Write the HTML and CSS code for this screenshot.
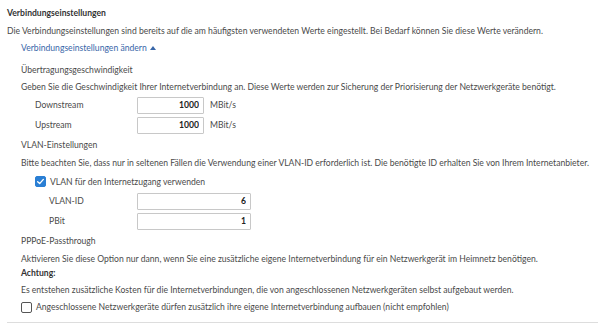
FILE: index.html
```html
<!doctype html>
<html lang="de">
  <head>
    <meta charset="UTF-8" />
    <meta name="viewport" content="width=device-width, initial-scale=1.0" />
    <title>Verbindungseinstellungen</title>
    <link rel="stylesheet" href="styles.css">
  </head>
  <body>
    <div class="page">
      <h2 class="title">Verbindungseinstellungen</h2>
      <p class="line">Die Verbindungseinstellungen sind bereits auf die am häufigsten verwendeten Werte eingestellt. Bei Bedarf können Sie diese Werte verändern.</p>

      <div class="details">
        <a class="toggle" href="#">Verbindungseinstellungen ändern <span class="arrow"></span></a>

        <h3 class="subtitle first">Übertragungsgeschwindigkeit</h3>
        <p class="line tight">Geben Sie die Geschwindigkeit Ihrer Internetverbindung an. Diese Werte werden zur Sicherung der Priorisierung der Netzwerkgeräte benötigt.</p>
        <div class="fields">
          <div class="row">
            <label class="label">Downstream</label>
            <input class="input short" type="text" value="1000" />
            <span class="unit">MBit/s</span>
          </div>
          <div class="row">
            <label class="label">Upstream</label>
            <input class="input short" type="text" value="1000" />
            <span class="unit">MBit/s</span>
          </div>
        </div>

        <h3 class="subtitle">VLAN-Einstellungen</h3>
        <p class="line">Bitte beachten Sie, dass nur in seltenen Fällen die Verwendung einer VLAN-ID erforderlich ist. Die benötigte ID erhalten Sie von Ihrem Internetanbieter.</p>
        <div class="fields">
          <label class="check">
            <span class="box checked">
              <svg viewBox="0 0 12 12" width="9" height="9"><path d="M2.2 6.2 L4.9 8.8 L9.8 3.2" fill="none" stroke="#fff" stroke-width="1.8" stroke-linecap="round" stroke-linejoin="round"/></svg>
            </span>
            VLAN für den Internetzugang verwenden
          </label>
          <div class="sub-fields">
            <div class="row">
              <label class="label narrow">VLAN-ID</label>
              <input class="input long" type="text" value="6" />
            </div>
            <div class="row">
              <label class="label narrow">PBit</label>
              <input class="input long" type="text" value="1" />
            </div>
          </div>
        </div>

        <h3 class="subtitle">PPPoE-Passthrough</h3>
        <p class="line">Aktivieren Sie diese Option nur dann, wenn Sie eine zusätzliche eigene Internetverbindung für ein Netzwerkgerät im Heimnetz benötigen.</p>
        <p class="warn">Achtung:</p>
        <p class="line">Es entstehen zusätzliche Kosten für die Internetverbindungen, die von angeschlossenen Netzwerkgeräten selbst aufgebaut werden.</p>
        <label class="check last">
          <span class="box"></span>
          Angeschlossene Netzwerkgeräte dürfen zusätzlich ihre eigene Internetverbindung aufbauen (nicht empfohlen)
        </label>
      </div>
      <div class="divider"></div>
    </div>
  </body>
</html>
```

FILE: styles.css
```css
body {
  margin: 0;
  background: #fff;
  font-family: Lato, "Open Sans", sans-serif;
  font-size: 8.6px;
  color: #4a4a4a;
}
.page {
  padding: 4px 0 0 7px;
}
.title {
  margin: 0;
  font-size: 8.6px;
  font-weight: bold;
  line-height: 18px;
  color: #333;
}
.line {
  margin: 0;
  line-height: 18px;
  white-space: nowrap;
}
.line.tight {
  line-height: 16px;
}
.details {
  padding-left: 14px;
}
.toggle {
  display: inline-block;
  line-height: 17px;
  color: #3866a8;
  text-decoration: none;
}
.arrow {
  display: inline-block;
  width: 0;
  height: 0;
  margin-left: 1px;
  vertical-align: 1px;
  border-left: 3px solid transparent;
  border-right: 3px solid transparent;
  border-bottom: 4px solid #3866a8;
}
.subtitle {
  margin: 1px 0 0;
  font-size: 8.6px;
  font-weight: normal;
  line-height: 18px;
}
.subtitle.first {
  margin-top: 4px;
}
.fields {
  padding-left: 14px;
}
.row {
  display: flex;
  align-items: center;
  height: 20px;
}
.label {
  width: 102px;
  flex: none;
}
.label.narrow {
  width: 88px;
}
.sub-fields {
  padding-left: 14px;
}
.input {
  box-sizing: border-box;
  height: 17px;
  padding: 0 4px;
  border: 1px solid #c8c8c8;
  border-radius: 1px;
  font-family: inherit;
  font-size: 8.6px;
  font-weight: bold;
  color: #222;
  text-align: right;
  outline: none;
}
.input.short {
  width: 67px;
}
.input.long {
  width: 114px;
}
.unit {
  margin-left: 6px;
}
.check {
  display: flex;
  align-items: center;
  gap: 4px;
  height: 19px;
}
.check.last {
  height: 16px;
}
.box {
  box-sizing: border-box;
  width: 11px;
  height: 11px;
  flex: none;
  display: flex;
  align-items: center;
  justify-content: center;
  border: 1px solid #555;
  border-radius: 2px;
  background: #fff;
}
.box.checked {
  border-color: #2a7fd4;
  background: #2a7fd4;
}
.warn {
  margin: 0;
  line-height: 11px;
  font-weight: bold;
  color: #333;
}
.warn + .line {
  margin-top: 2px;
}
.divider {
  margin-top: 7px;
  margin-right: 7px;
  border-top: 1px solid #ddd;
}
```
